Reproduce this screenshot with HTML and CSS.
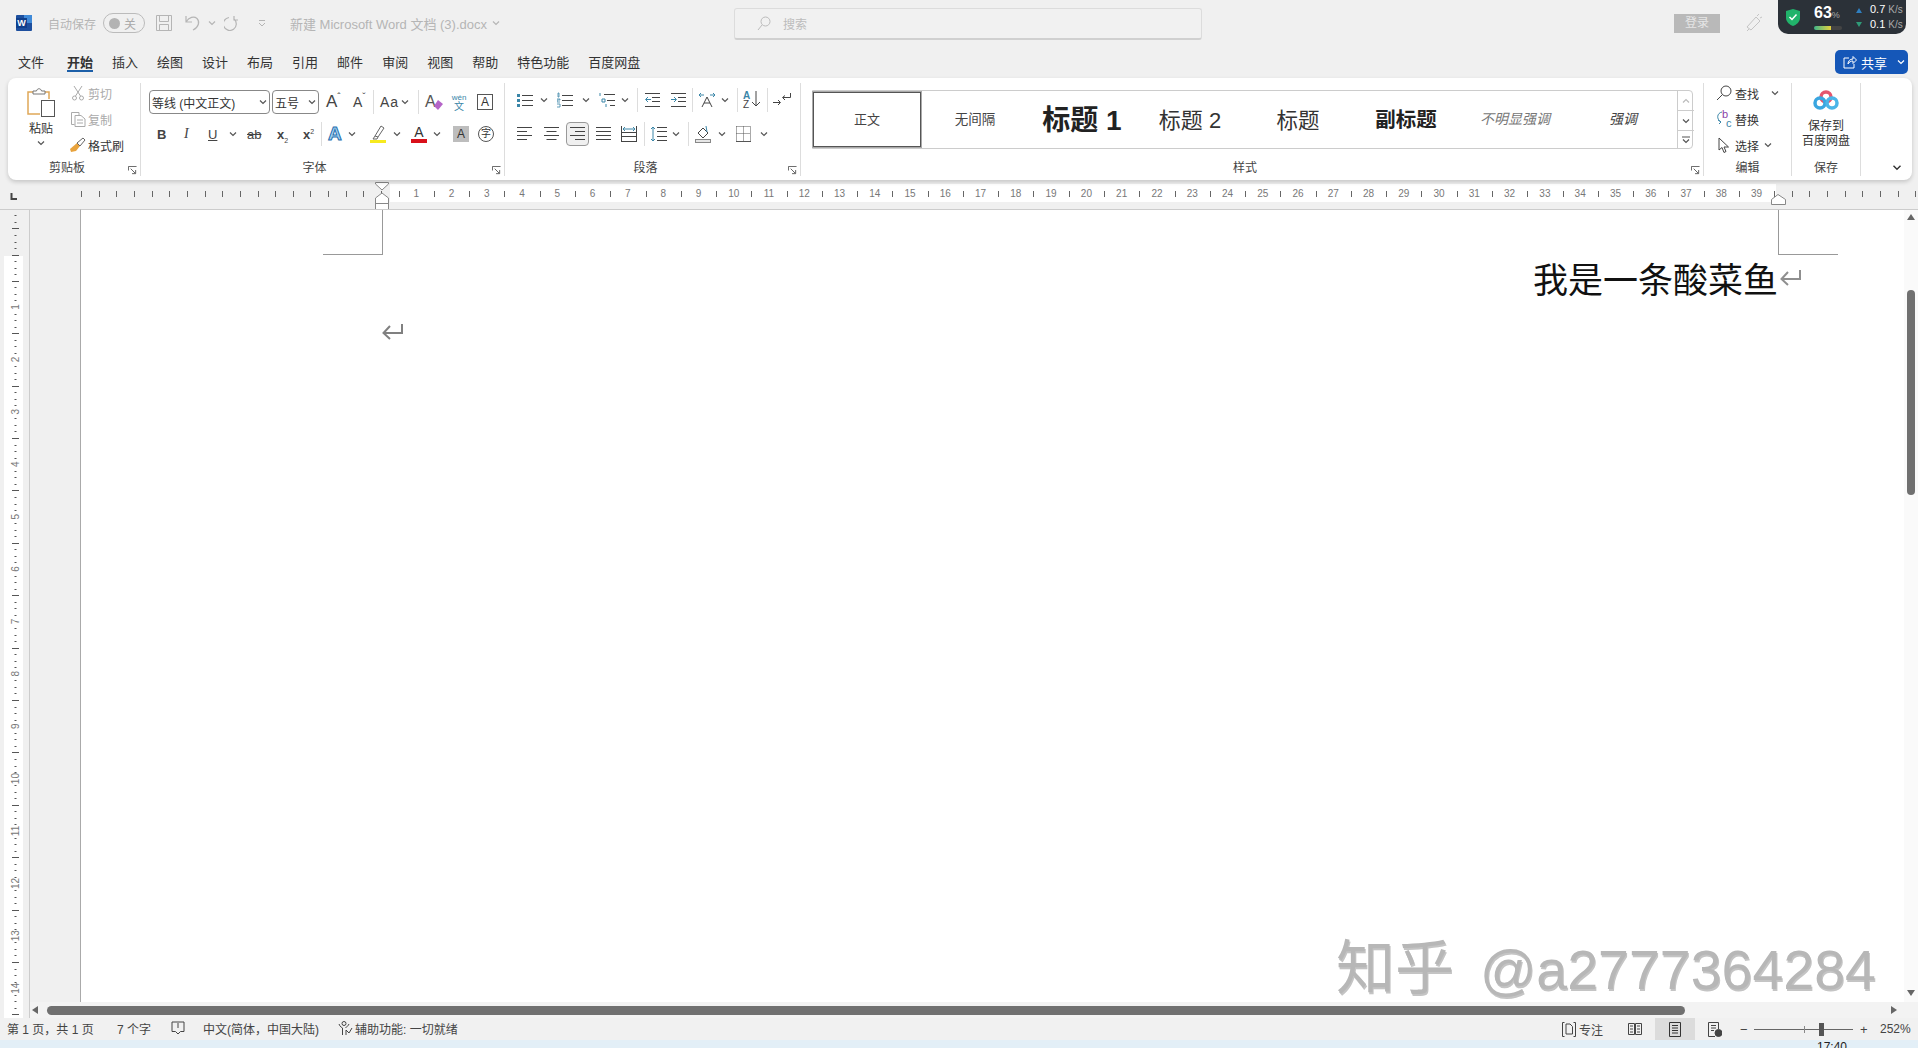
FILE: index.html
```html
<!DOCTYPE html>
<html lang="zh-CN">
<head>
  <meta charset="UTF-8" />
  <title>新建 Microsoft Word 文档 (3).docx - Word</title>
  <link rel="stylesheet" href="styles.css">
</head>
<body>
  <svg class="sprites" width="0" height="0">
    <symbol id="caret" viewBox="0 0 8 6"><path d="M1 1.5 4 4.5 7 1.5" fill="none" stroke="currentColor" stroke-width="1.2"/></symbol>
    <symbol id="launcher" viewBox="0 0 10 10"><path d="M.5 5V.5H9.5M3 3 8 8M4.5 8.5H8.5V4.5" fill="none" stroke="#555"/></symbol>
  </svg>

  <!-- 标题栏 -->
  <header class="titlebar">
    <svg class="word-icon" width="16" height="16" viewBox="0 0 16 16"><rect width="16" height="16" rx="1" fill="#1d4f9e"/><rect x="8" width="8" height="8" fill="#3f8ad8"/><rect y="3" width="11" height="10" fill="#0f3f8c"/><text x="5.5" y="11" class="word-w">W</text></svg>
    <span class="muted">自动保存</span>
    <span class="toggle"><i class="knob"></i><span>关</span></span>
    <svg width="16" height="16" viewBox="0 0 16 16" fill="none" stroke="#b5b5b5"><path d="M.5.5H15.5V15.5H.5ZM3.5.5V6.5H12.5V.5M3.5 15.5V9.5H12.5V15.5"/></svg>
    <svg width="16" height="16" viewBox="0 0 16 16" fill="none" stroke="#b5b5b5" stroke-width="1.2"><path d="M1 1V7H7M1 7C4 2 9 1 12 3.5 15 6.5 14 12 8 15"/></svg>
    <svg class="caret-sm grey" width="8" height="6"><use href="#caret"/></svg>
    <svg width="16" height="16" viewBox="0 0 16 16" fill="none" stroke="#b5b5b5" stroke-width="1.2"><path d="M10 1V5H14M10 4A6.5 6.5 0 1 1 5 2.5"/></svg>
    <svg width="8" height="8" viewBox="0 0 8 8" fill="none" stroke="#b5b5b5"><path d="M1 1.5H7M1 4 4 7 7 4"/></svg>
    <span class="muted doc-title">新建 Microsoft Word 文档 (3).docx <svg class="caret-sm grey" width="8" height="6"><use href="#caret"/></svg></span>
    <div class="search">
      <svg width="14" height="15" viewBox="0 0 14 15" fill="none" stroke="#bbb"><circle cx="8.5" cy="5.5" r="4.5"/><path d="M5 9 1 14"/></svg>
      <span>搜索</span>
    </div>
    <span class="login">登录</span>
    <svg width="18" height="18" viewBox="0 0 18 18" fill="none" stroke="#c4c4c4"><path d="M2 13 11 3 15 7 6 16ZM4 15 2 17M12 2 14 0M15 4 17 3"/></svg>
    <div class="tray">
      <svg width="14" height="17" viewBox="0 0 14 17"><path d="M7 0 14 2V9C14 13 10 16 7 17 4 16 0 13 0 9V2Z" fill="#21b36b"/><path d="M3.5 8 6 10.5 10.5 5.5" fill="none" stroke="#fff" stroke-width="1.5"/></svg>
      <div class="tray-score">
        <b>63<small>%</small></b>
        <span class="tray-bar"></span>
      </div>
      <div class="tray-arrows"><i class="up"></i><i class="down"></i></div>
      <div class="tray-speed">
        <span>0.7 <em>K/s</em></span>
        <span>0.1 <em>K/s</em></span>
      </div>
    </div>
  </header>

  <!-- 选项卡 -->
  <nav class="tabs">
    <a>文件</a>
    <a class="active">开始</a>
    <a>插入</a>
    <a>绘图</a>
    <a>设计</a>
    <a>布局</a>
    <a>引用</a>
    <a>邮件</a>
    <a>审阅</a>
    <a>视图</a>
    <a>帮助</a>
    <a>特色功能</a>
    <a>百度网盘</a>
    <button class="share">
      <svg width="14" height="14" viewBox="0 0 14 14" fill="none" stroke="#fff"><path d="M6 3H1V13H11V9M5 9C5 6 7 4 10 4V1.5L13.5 5 10 8.5V6C8 6 6 7 5 9Z"/></svg>
      <span>共享</span>
      <svg class="caret-sm" width="8" height="6"><use href="#caret"/></svg>
    </button>
  </nav>

  <!-- 功能区 -->
  <section class="ribbon">
    <div class="group g-clip">
      <div class="group-body clip-body">
        <div class="paste">
          <svg width="28" height="30" viewBox="0 0 28 30" fill="none"><path d="M6 4H1V26H13" stroke="#e0a858" stroke-width="1.5"/><path d="M18 4H22V11" stroke="#e0a858" stroke-width="1.5"/><path d="M6 6V3H9.5C10 0 14 0 14.5 3H18V6Z" stroke="#777" fill="#fff"/><rect x="14.5" y="12.5" width="13" height="16" stroke="#555" fill="#fff"/></svg>
          <span>粘贴</span>
          <svg class="caret-sm" width="8" height="6"><use href="#caret"/></svg>
        </div>
        <div class="clip-list">
          <div class="clip-item off">
            <svg width="12" height="16" viewBox="0 0 12 16" fill="none" stroke="#aaa"><path d="M2 1 8.5 11M10 1 3.5 11"/><circle cx="2.5" cy="13" r="2"/><circle cx="9.5" cy="13" r="2"/></svg>
            <span>剪切</span>
          </div>
          <div class="clip-item off">
            <svg width="15" height="15" viewBox="0 0 15 15" fill="none" stroke="#aaa"><path d="M3.5 12.5H.5V.5H8V3M4 3.5H10L14 7V14.5H4ZM6 8H12M6 11H12"/></svg>
            <span>复制</span>
          </div>
          <div class="clip-item">
            <svg width="16" height="16" viewBox="0 0 16 16"><path d="M7 6 10 9 6 14 1 15 0 12Z" fill="#e8a33d"/><path d="M7 6 13 1 15 3 10 9Z" fill="#fff" stroke="#666"/></svg>
            <span>格式刷</span>
          </div>
        </div>
      </div>
      <div class="group-label">剪贴板<svg class="launcher" width="9" height="9"><use href="#launcher"/></svg></div>
    </div>

    <div class="group g-font">
      <div class="group-body">
        <div class="tools font-r1">
          <span class="combo font-name">等线 (中文正文)<svg class="caret-sm" width="8" height="6"><use href="#caret"/></svg></span>
          <span class="combo font-size">五号<svg class="caret-sm" width="8" height="6"><use href="#caret"/></svg></span>
          <span class="glyph big-a">A<sup>ˆ</sup></span>
          <span class="glyph small-a">A<sup>ˇ</sup></span>
          <i class="sep"></i>
          <span class="glyph aa">Aa <svg class="caret-sm" width="8" height="6"><use href="#caret"/></svg></span>
          <i class="sep"></i>
          <span class="glyph clear-a">A<svg width="10" height="10" viewBox="0 0 10 10"><path d="M5 0 10 4 5 10 1 6Z" fill="#b565c8"/></svg></span>
          <span class="wen"><small>wén</small><b>文</b></span>
          <span class="boxed-a">A</span>
        </div>
        <div class="tools font-r2">
          <b class="glyph">B</b>
          <i class="glyph serif">I</i>
          <u class="glyph">U</u>
          <svg class="caret-sm" width="8" height="6"><use href="#caret"/></svg>
          <s class="glyph">ab</s>
          <b class="glyph">x<sub>2</sub></b>
          <b class="glyph">x<sup>2</sup></b>
          <i class="sep"></i>
          <span class="effect-a">A</span>
          <svg class="caret-sm" width="8" height="6"><use href="#caret"/></svg>
          <svg width="16" height="18" viewBox="0 0 16 18"><path d="M5 11 11 1 14 3 8 12ZM5 11 3 14H7L8 12" fill="#fff" stroke="#666"/><rect y="15" width="16" height="3" fill="#f7ea1f"/></svg>
          <svg class="caret-sm" width="8" height="6"><use href="#caret"/></svg>
          <span class="color-a">A</span>
          <svg class="caret-sm" width="8" height="6"><use href="#caret"/></svg>
          <span class="shade-a">A</span>
          <span class="circle-zi">字</span>
        </div>
      </div>
      <div class="group-label">字体<svg class="launcher" width="9" height="9"><use href="#launcher"/></svg></div>
    </div>

    <div class="group g-para">
      <div class="group-body">
        <div class="tools para-r1">
          <svg width="16" height="16" viewBox="0 0 16 16"><path d="M5 3.5H16M5 8.5H16M5 13.5H16" stroke="#444"/><path d="M0 2H3V5H0ZM0 7H3V10H0ZM0 12H3V15H0Z" fill="#3a86a8"/></svg>
          <svg class="caret-sm" width="8" height="6"><use href="#caret"/></svg>
          <svg width="16" height="16" viewBox="0 0 16 16"><path d="M5 3.5H16M5 8.5H16M5 13.5H16" stroke="#444"/><path d="M1 1H2V5H1ZM0 7H3V8H0V10H3M0 12H3V15H0" fill="none" stroke="#3a86a8" stroke-width=".8"/></svg>
          <svg class="caret-sm" width="8" height="6"><use href="#caret"/></svg>
          <svg width="16" height="16" viewBox="0 0 16 16"><path d="M5 2.5H16M8 8.5H16M11 13.5H16" stroke="#444"/><path d="M1 1V4M3 7H6V10H3ZM7 12V15" fill="none" stroke="#3a86a8"/></svg>
          <svg class="caret-sm" width="8" height="6"><use href="#caret"/></svg>
          <i class="sep"></i>
          <svg width="15" height="14" viewBox="0 0 15 14"><path d="M0 .5H15M7 4.5H15M7 8.5H15M0 13.5H15" stroke="#444"/><path d="M6 6.5H1M3 4 .5 6.5 3 9" fill="none" stroke="#3a86a8"/></svg>
          <svg width="15" height="14" viewBox="0 0 15 14"><path d="M0 .5H15M7 4.5H15M7 8.5H15M0 13.5H15" stroke="#444"/><path d="M0 6.5H5M3 4 5.5 6.5 3 9" fill="none" stroke="#3a86a8"/></svg>
          <i class="sep"></i>
          <svg width="16" height="16" viewBox="0 0 16 16" fill="none"><path d="M3 15 8 5 13 15M5 11H11" stroke="#444"/><path d="M0 3H5M2 1 0 3 2 5M16 3H11M14 1 16 3 14 5" stroke="#3a86a8"/></svg>
          <svg class="caret-sm" width="8" height="6"><use href="#caret"/></svg>
          <i class="sep"></i>
          <span class="sort"><b>A</b><b>Z</b><svg width="8" height="16" viewBox="0 0 8 16" fill="none" stroke="#444"><path d="M4 0V15M0 11 4 15 8 11"/></svg></span>
          <i class="sep"></i>
          <svg width="18" height="14" viewBox="0 0 18 14" fill="none" stroke="#444"><path d="M0 9.5H7M5 7 7.5 9.5 5 12M17.5 0V4.5H10M12 2.5 9.5 4.5 12 7"/></svg>
        </div>
        <div class="tools para-r2">
          <svg width="15" height="14" viewBox="0 0 15 14"><path d="M0 .5H15M0 4.5H10M0 8.5H15M0 12.5H10" stroke="#444"/></svg>
          <svg width="15" height="14" viewBox="0 0 15 14"><path d="M0 .5H15M2.5 4.5H12.5M0 8.5H15M2.5 12.5H12.5" stroke="#444"/></svg>
          <span class="active-tool"><svg width="15" height="14" viewBox="0 0 15 14"><path d="M0 .5H15M5 4.5H15M0 8.5H15M5 12.5H15" stroke="#444"/></svg></span>
          <svg width="15" height="14" viewBox="0 0 15 14"><path d="M0 .5H15M0 4.5H15M0 8.5H15M0 12.5H15" stroke="#444"/></svg>
          <svg width="16" height="16" viewBox="0 0 16 16" fill="none"><path d="M.5 0V16M15.5 0V16M0 6.5H16M0 10.5H16M0 15.5H16" stroke="#444"/><path d="M2 3H14M4 1 2 3 4 5M12 1 14 3 12 5" stroke="#3a86a8"/></svg>
          <i class="sep"></i>
          <svg width="17" height="16" viewBox="0 0 17 16" fill="none"><path d="M7 1.5H17M7 5.5H17M7 10.5H17M7 14.5H17" stroke="#444"/><path d="M3 1V15M1 3 3 1 5 3M1 13 3 15 5 13" stroke="#3a86a8"/></svg>
          <svg class="caret-sm" width="8" height="6"><use href="#caret"/></svg>
          <i class="sep"></i>
          <svg width="16" height="18" viewBox="0 0 16 18" fill="none"><path d="M3 8 8 3 13 8 8 13Z" stroke="#444"/><path d="M11 1 12 7" stroke="#3a86a8"/><rect x=".5" y="14.5" width="15" height="3" fill="#e6e6e6" stroke="#888"/></svg>
          <svg class="caret-sm" width="8" height="6"><use href="#caret"/></svg>
          <svg width="15" height="16" viewBox="0 0 15 16" fill="none" stroke="#555"><path d="M.5.5H14.5M.5 7.5H14.5M7.5.5V15M.5.5V15M14.5.5V15" stroke-dasharray="1 1"/><path d="M0 15.5H15"/></svg>
          <svg class="caret-sm" width="8" height="6"><use href="#caret"/></svg>
        </div>
      </div>
      <div class="group-label">段落<svg class="launcher" width="9" height="9"><use href="#launcher"/></svg></div>
    </div>

    <div class="group g-styles">
      <div class="group-body">
        <div class="gallery">
          <span class="style selected">正文</span>
          <span class="style s-plain">无间隔</span>
          <span class="style s-h1">标题 1</span>
          <span class="style s-h2">标题 2</span>
          <span class="style s-title">标题</span>
          <span class="style s-sub">副标题</span>
          <span class="style s-weak">不明显强调</span>
          <span class="style s-em">强调</span>
          <div class="gallery-scroll">
            <span><svg width="8" height="6" viewBox="0 0 8 6" fill="none" stroke="#bbb" stroke-width="1.2"><path d="M1 4.5 4 1.5 7 4.5"/></svg></span>
            <span><svg class="caret-sm" width="8" height="6"><use href="#caret"/></svg></span>
            <span><svg width="8" height="8" viewBox="0 0 8 8" fill="none" stroke="#555" stroke-width="1.2"><path d="M0 1H8M1 3.5 4 6.5 7 3.5"/></svg></span>
          </div>
        </div>
      </div>
      <div class="group-label">样式<svg class="launcher" width="9" height="9"><use href="#launcher"/></svg></div>
    </div>

    <div class="group g-edit">
      <div class="group-body edit-list">
        <div class="edit-item">
          <svg width="16" height="16" viewBox="0 0 16 16" fill="none" stroke="#444"><circle cx="10" cy="6" r="5"/><path d="M6.5 9.5 1 15"/></svg>
          <span>查找</span><svg class="caret-sm find-caret" width="8" height="6"><use href="#caret"/></svg>
        </div>
        <div class="edit-item">
          <span class="replace-icon"><b>b</b><i>c</i><svg width="9" height="14" viewBox="0 0 9 14" fill="none" stroke="#3a86a8"><path d="M6 1C1 2 0 8 5 11M2 9 5 11 3 13"/></svg></span>
          <span>替换</span>
        </div>
        <div class="edit-item">
          <svg width="12" height="17" viewBox="0 0 12 17" fill="none" stroke="#444"><path d="M1 1V13L4 10.5 6 15.5 8 14.5 6 10H10.5Z"/></svg>
          <span>选择</span><svg class="caret-sm" width="8" height="6"><use href="#caret"/></svg>
        </div>
      </div>
      <div class="group-label">编辑</div>
    </div>

    <div class="group g-save">
      <div class="group-body save-body">
        <svg width="26" height="20" viewBox="0 0 26 20" fill="none" stroke-width="3.5"><circle cx="13" cy="7" r="5" stroke="#e5566d"/><circle cx="7" cy="13" r="5" stroke="#3aa6e0"/><circle cx="19" cy="13" r="5" stroke="#4ab5e8"/></svg>
        <span>保存到</span>
        <span>百度网盘</span>
      </div>
      <div class="group-label">保存</div>
    </div>

    <div class="ribbon-end">
      <svg width="10" height="7" viewBox="0 0 8 6"><use href="#caret"/></svg>
    </div>
  </section>

  <!-- 标尺 -->
  <div class="hruler" id="hruler"></div>

  <div class="lower">
    <div class="vruler" id="vruler"></div>
    <div class="main-col">
      <div class="workspace">
        <div class="gutter"></div>
        <div class="page">
          <i class="corner corner-l"></i>
          <i class="corner corner-r"></i>
          <p class="line-right">我是一条酸菜鱼<svg class="para-mark" width="21" height="17" viewBox="0 0 21 17"><path d="M20 1V10H2M8 3 1.5 10 8 16" fill="none" stroke="#8f8f8f" stroke-width="2"/></svg></p>
          <p class="line-empty"><svg class="para-mark" width="21" height="17" viewBox="0 0 21 17"><path d="M20 1V10H2M8 3 1.5 10 8 16" fill="none" stroke="#808080" stroke-width="2"/></svg></p>
        </div>
        <div class="vscroll">
          <span class="arrow-up"></span>
          <span class="vthumb"></span>
          <span class="arrow-down"></span>
        </div>
      </div>
      <div class="hscroll">
        <span class="arrow-left"></span>
        <span class="hthumb"></span>
        <span class="arrow-right"></span>
      </div>
    </div>
  </div>

  <!-- 状态栏 -->
  <footer class="statusbar">
    <div class="status-left">
      <span>第 1 页，共 1 页</span>
      <span>7 个字</span>
      <svg width="14" height="14" viewBox="0 0 14 14" fill="none" stroke="#444"><path d="M7 2V7M7 13 4.5 10.5H1V1H13V10.5H9.5Z"/></svg>
      <span>中文(简体，中国大陆)</span>
      <svg width="15" height="15" viewBox="0 0 15 15" fill="none" stroke="#444"><circle cx="6" cy="2.5" r="2"/><path d="M1 3C2 6 4 6.5 4.5 7V14M8 14V9L11 12 14 7M7.5 6.5C9 6 10 5 11 3"/></svg>
      <span>辅助功能: 一切就绪</span>
    </div>
    <div class="status-right">
      <svg width="14" height="15" viewBox="0 0 14 15" fill="none" stroke="#444"><path d="M2.5.5H.5V14.5H2.5M11.5.5H13.5V14.5H11.5M4 2H8L10.5 4.5V12H4Z"/></svg>
      <span>专注</span>
      <svg width="14" height="14" viewBox="0 0 14 14" fill="none" stroke="#444"><path d="M.5 1.5H6.5V12.5H.5ZM7.5 1.5H13.5V12.5H7.5ZM2 4H5M2 7H5M2 10H5M9 4H12M9 7H12M9 10H12"/></svg>
      <span class="view-active"><svg width="12" height="15" viewBox="0 0 12 15" fill="none" stroke="#333"><path d="M.5.5H11.5V14.5H.5ZM3 3.5H9M3 6H9M3 8.5H9M3 11H9"/></svg></span>
      <svg width="14" height="15" viewBox="0 0 14 15" fill="none" stroke="#444"><path d="M.5.5H10.5V7M7 14.5H.5V.5M3 3.5H8M3 6H8M3 8.5H6"/><circle cx="10.5" cy="11" r="3.5" fill="#444"/></svg>
      <span class="zoom-btn">−</span>
      <span class="slider"><i class="slider-mid"></i><i class="slider-thumb"></i></span>
      <span class="zoom-btn">+</span>
      <span>252%</span>
    </div>
  </footer>
  <div class="taskbar"><span>17:40</span></div>

  <div class="watermark">知乎<span class="watermark-id">@a2777364284</span></div>

  <script src="ruler.js"></script>
</body>
</html>
```
FILE: styles.css
```css
* {
  box-sizing: border-box;
}
html, body {
  margin: 0;
  height: 1048px;
  overflow: hidden;
}
body {
  position: relative;
  width: 1918px;
  background: #f0f0f0;
  color: #333;
  font-family: "Liberation Sans", "Noto Sans CJK SC", sans-serif;
  font-size: 12px;
}
svg {
  display: block;
  flex: none;
}
.sprites {
  position: absolute;
}
.caret-sm {
  color: #555;
}
.grey {
  color: #b5b5b5;
}

/* 标题栏 */
.titlebar {
  display: grid;
  grid-template-columns: 32px 55px 53px 29px 23px 16px 34px 32px 444px 940px 71px 33px 128px;
  align-items: center;
  height: 46px;
  padding-left: 16px;
}
.word-w {
  fill: #fff;
  font: bold 9px "Liberation Sans", sans-serif;
  text-anchor: middle;
}
.muted {
  color: #b5b5b5;
}
.doc-title {
  display: flex;
  align-items: center;
  gap: 5px;
  font-size: 13px;
}
.toggle {
  display: flex;
  align-items: center;
  justify-content: space-between;
  width: 42px;
  height: 20px;
  padding: 0 8px 0 5px;
  border: 1px solid #bbb;
  border-radius: 10px;
  color: #aaa;
}
.knob {
  width: 11px;
  height: 11px;
  border-radius: 50%;
  background: #b3b3b3;
}
.search {
  display: flex;
  align-items: center;
  gap: 12px;
  width: 468px;
  height: 32px;
  margin-top: 2px;
  padding-left: 22px;
  background: #f1f1f1;
  border: 1px solid #dcdcdc;
  border-bottom: 2px solid #d0d0d0;
  border-radius: 3px;
  color: #bcbcbc;
}
.login {
  width: 46px;
  height: 19px;
  background: #b9b9b9;
  color: #e6e6e6;
  text-align: center;
  line-height: 19px;
}
.tray {
  display: flex;
  align-self: start;
  align-items: center;
  height: 34px;
  padding-left: 8px;
  background: #2b3138;
  border-radius: 0 0 10px 10px;
  color: #fff;
}
.tray-score {
  display: flex;
  flex-direction: column;
  width: 36px;
  margin-left: 14px;
}
.tray-score b {
  font-size: 16px;
  line-height: 17px;
}
.tray-score small {
  font-size: 9px;
  font-weight: normal;
  color: #aaa;
}
.tray-bar {
  width: 28px;
  height: 4px;
  margin-top: 2px;
  border-radius: 2px;
  background: linear-gradient(90deg, #3fb68b 0, #e3cf3c 60%, #444 62%);
}
.tray-arrows {
  display: flex;
  flex-direction: column;
  gap: 9px;
  margin: 0 8px 0 6px;
}
.tray-arrows i {
  width: 0;
  border: 3px solid transparent;
}
.tray-arrows .up {
  border-top: 0;
  border-bottom: 5px solid #2f7fc0;
}
.tray-arrows .down {
  border-bottom: 0;
  border-top: 5px solid #2f9a78;
}
.tray-speed {
  display: flex;
  flex-direction: column;
  gap: 2px;
  font-size: 11px;
  line-height: 13px;
  white-space: nowrap;
}
.tray-speed em {
  font-style: normal;
  font-size: 10px;
  color: #aaa;
}

/* 选项卡 */
.tabs {
  display: flex;
  align-items: center;
  gap: 19px;
  height: 32px;
  padding: 0 10px 0 18px;
  font-size: 13px;
  color: #333;
}
.tabs a {
  margin-top: -2px;
}
.tabs a.active {
  position: relative;
  margin-left: 4px;
  font-weight: bold;
}
.tabs a.active::after {
  content: "";
  position: absolute;
  left: 0;
  right: 0;
  bottom: -1px;
  height: 2px;
  background: #1c5fa8;
}
.share {
  display: flex;
  align-items: center;
  gap: 4px;
  width: 73px;
  height: 24px;
  margin-left: auto;
  padding: 0 0 0 8px;
  border: 0;
  border-radius: 5px;
  background: #1557b8;
  color: #fff;
  font: 13px "Liberation Sans", "Noto Sans CJK SC", sans-serif;
}
.share .caret-sm {
  margin-left: 6px;
  color: #fff;
}

/* 功能区 */
.ribbon {
  display: flex;
  width: 1904px;
  height: 102px;
  margin-left: 8px;
  padding: 5px 0;
  background: #fff;
  border-radius: 8px;
  box-shadow: 0 2px 4px rgba(0,0,0,0.18);
  position: relative;
}
.group {
  display: flex;
  flex-direction: column;
  flex: none;
  height: 93px;
  border-right: 1px solid #ddd;
}
.group-body {
  flex: 1;
}
.group-label {
  position: relative;
  height: 16px;
  text-align: center;
  font-size: 12px;
  line-height: 16px;
  color: #444;
}
.launcher {
  position: absolute;
  right: 3px;
  bottom: 1px;
}
.g-clip { width: 133px; }
.g-clip .group-label { padding-right: 14px; }
.g-font { width: 364px; padding-left: 8px; }
.g-font .group-label { padding-right: 24px; }
.g-para { width: 296px; padding-left: 12px; }
.g-para .group-label { padding-right: 26px; }
.g-styles { width: 903px; padding-left: 11px; }
.g-styles .group-label { padding-right: 25px; }
.g-edit { width: 88px; }
.g-save { width: 69px; }

.clip-body {
  display: flex;
}
.paste {
  display: flex;
  flex-direction: column;
  align-items: center;
  width: 60px;
  padding: 5px 0 0 6px;
}
.paste span {
  margin-top: 3px;
  line-height: 16px;
}
.paste .caret-sm {
  margin-top: 3px;
}
.clip-list {
  margin-top: -3px;
}
.clip-item {
  display: grid;
  grid-template-columns: 20px auto;
  justify-content: start;
  align-items: center;
  justify-items: center;
  height: 26px;
}
.clip-item.off {
  color: #aaa;
}

.tools {
  display: grid;
  align-items: center;
  height: 24px;
}
.font-r1 {
  grid-template-columns: 123px 54px 27px 20px 7px 38px 7px 27px 25px auto;
  margin-top: 7px;
}
.font-r2 {
  grid-template-columns: 27px 24px 21px 18px 30px 26px 18px 7px 20px 22px 23px 18px 22px 20px 25px auto;
  margin: 8px 0 0 8px;
}
.para-r1 {
  grid-template-columns: 23px 17px 25px 17px 22px 16px 8px 26px 21px 7px 22px 16px 6px 24px 6px auto;
  margin-top: 5px;
}
.para-r2 {
  grid-template-columns: 27px 22px 30px 25px 23px 6px 22px 16px 7px 23px 18px 24px auto;
  margin-top: 10px;
}
.sep {
  display: block;
  width: 1px;
  height: 24px;
  background: #ddd;
}
.glyph {
  display: flex;
  align-items: center;
  font-size: 13px;
  color: #444;
  white-space: nowrap;
}
b.glyph, u.glyph, s.glyph {
  display: block;
}
.serif {
  font-family: "Liberation Serif", serif;
  font-size: 14px;
}
.glyph sub, .glyph sup {
  font-size: 7px;
  font-weight: normal;
  line-height: 0;
}
.combo {
  display: flex;
  align-items: center;
  justify-content: space-between;
  height: 24px;
  padding: 0 2px;
  border: 1px solid #888;
  border-radius: 4px;
  white-space: nowrap;
}
.font-name { width: 121px; }
.font-size { width: 47px; }
.big-a { font-size: 17px; }
.big-a sup, .small-a sup {
  margin-top: -8px;
  font-size: 10px;
}
.small-a { font-size: 14px; }
.aa { font-size: 14px; letter-spacing: 1px; gap: 2px; }
.clear-a { font-size: 16px; color: #555; }
.clear-a svg { margin: 6px 0 0 -3px; }
.wen {
  display: flex;
  flex-direction: column;
  width: 14px;
  align-items: center;
  font-size: 8px;
  line-height: 9px;
  color: #3a86a8;
}
.wen small { font-size: 8px; }
.wen b { font-weight: normal; font-size: 10px; }
.boxed-a {
  width: 16px;
  height: 16px;
  border: 1px solid #555;
  text-align: center;
  line-height: 14px;
  font-size: 12px;
}
.effect-a {
  font-size: 19px;
  font-weight: bold;
  color: #a8d4f0;
  -webkit-text-stroke: 1px #1f6fb0;
  line-height: 24px;
}
.color-a {
  width: 16px;
  height: 18px;
  border-bottom: 4px solid #d9101a;
  text-align: center;
  font-size: 14px;
  line-height: 14px;
}
.shade-a {
  width: 16px;
  height: 16px;
  background: #bdbdbd;
  text-align: center;
  line-height: 16px;
  font-size: 12px;
}
.circle-zi {
  width: 16px;
  height: 16px;
  border: 1px solid #555;
  border-radius: 50%;
  text-align: center;
  line-height: 14px;
  font-size: 10px;
}
.sort {
  display: grid;
  grid-template-columns: 9px 9px;
  grid-template-rows: 9px 9px;
  color: #3a86a8;
  font-size: 10px;
  line-height: 9px;
}
.sort b:nth-child(2) { grid-row: 2; color: #444; font-weight: normal; }
.sort svg { grid-column: 2; grid-row: 1 / 3; }
.active-tool {
  display: flex;
  align-items: center;
  justify-content: center;
  width: 23px;
  height: 24px;
  background: #f0f0f0;
  border: 1px solid #999;
  border-radius: 4px;
}

.gallery {
  display: grid;
  grid-template-columns: repeat(8, 108px) 16px;
  width: 881px;
  height: 59px;
  margin-top: 7px;
  border: 1px solid #ccc;
  border-radius: 0 4px 4px 0;
}
.style {
  display: flex;
  align-items: center;
  justify-content: center;
  padding-bottom: 3px;
  color: #444;
  white-space: nowrap;
}
.style.selected {
  height: 55px;
  margin-top: 1px;
  background: #fff;
  border: 1px solid #555;
  outline: 1px solid #aaa;
  font-size: 13px;
}
.s-plain { font-size: 13.5px; }
.s-h1 { font-size: 28px; font-weight: bold; color: #222; margin-left: -2px; }
.s-h2 { font-size: 22px; color: #333; margin-left: -2px; }
.s-title { font-size: 21.5px; color: #333; margin-left: -2px; }
.s-sub { font-size: 20.5px; font-weight: bold; color: #222; margin-left: -2px; }
.s-weak { font-size: 14px; font-style: italic; color: #777; }
.s-em { font-size: 14px; font-style: italic; color: #444; }
.gallery-scroll {
  display: grid;
  grid-template-rows: 20px 20px 1fr;
  border-left: 1px solid #ccc;
  margin-right: -1px;
}
.gallery-scroll span {
  display: flex;
  align-items: center;
  justify-content: center;
  border-bottom: 1px solid #ccc;
}
.gallery-scroll span:last-child {
  border-bottom: 0;
}
.edit-list {
  margin-top: -3px;
  padding-left: 12px;
}
.edit-item {
  display: flex;
  align-items: center;
  height: 26px;
}
.edit-item > svg:first-child, .replace-icon {
  margin-right: 3px;
}
.edit-item > svg:first-child {
  width: 16px;
}
.edit-item .caret-sm {
  margin-left: 5px;
}
.edit-item .find-caret {
  margin-left: 12px;
}
.replace-icon {
  display: block;
  position: relative;
  flex: none;
  width: 16px;
  height: 16px;
}
.replace-icon b, .replace-icon i {
  position: absolute;
  font-style: normal;
  font-weight: normal;
  font-size: 11px;
  line-height: 1;
}
.replace-icon b { left: 6px; top: -2px; color: #8a3fa8; }
.replace-icon i { left: 10px; top: 7px; color: #3a86a8; }
.save-body {
  display: flex;
  flex-direction: column;
  align-items: center;
  padding-top: 7px;
  line-height: 15px;
}
.save-body svg {
  margin-bottom: 9px;
}
.ribbon-end {
  display: flex;
  flex: 1;
  align-items: flex-end;
  justify-content: center;
  padding: 0 0 4px 20px;
  color: #333;
}

/* 标尺 */
.hruler {
  height: 30px;
}
.hruler svg, .vruler svg {
  font-family: "Liberation Sans", sans-serif;
  font-size: 10px;
  fill: #777;
}
.lower {
  display: flex;
  height: 808px;
}
.vruler {
  flex: none;
  width: 30px;
  border-right: 1px solid #ccc;
}
.main-col {
  display: flex;
  flex-direction: column;
  flex: 1;
}
.workspace {
  display: flex;
  height: 792px;
}
.gutter {
  flex: none;
  width: 50px;
}
.page {
  position: relative;
  flex: 1;
  padding-top: 42px;
  margin-top: -1px;
  background: #fff;
  border-left: 1px solid #aaa;
  border-top: 1px solid #ccc;
}
.corner {
  position: absolute;
  top: 0;
  width: 60px;
  height: 45px;
  border-bottom: 1px solid #999;
}
.corner-l {
  left: 242px;
  border-right: 1px solid #999;
}
.corner-r {
  left: 1697px;
  border-left: 1px solid #999;
}
.line-right {
  display: flex;
  align-items: center;
  justify-content: flex-end;
  height: 50px;
  margin: 0;
  padding-right: 103px;
  font-size: 35px;
  color: #111;
}
.para-mark {
  margin-left: 2px;
}
.line-empty {
  height: 50px;
  margin: 0;
  padding: 21px 0 0 299px;
}
.vscroll {
  display: flex;
  flex-direction: column;
  align-items: center;
  flex: none;
  position: relative;
  width: 14px;
  background: #fafafa;
}
.vthumb {
  position: absolute;
  top: 80px;
  width: 8px;
  height: 205px;
  border-radius: 4px;
  background: #707070;
}
.arrow-up, .arrow-down, .arrow-left, .arrow-right {
  position: absolute;
  width: 0;
  border: 4px solid transparent;
}
.arrow-up { top: 4px; border-top: 0; border-bottom: 6px solid #666; }
.arrow-down { bottom: 6px; border-bottom: 0; border-top: 6px solid #666; }
.hscroll {
  position: relative;
  display: flex;
  align-items: center;
  height: 16px;
  background: #f3f3f3;
}
.hthumb {
  position: absolute;
  left: 17px;
  width: 1638px;
  height: 9px;
  border-radius: 5px;
  background: #707070;
}
.arrow-left { left: 2px; border-left: 0; border-right: 6px solid #666; }
.arrow-right { left: 1861px; border-right: 0; border-left: 6px solid #666; }

/* 状态栏 */
.statusbar {
  display: flex;
  justify-content: space-between;
  align-items: center;
  height: 22px;
  background: #f1f1f1;
  color: #444;
  white-space: nowrap;
}
.status-left {
  display: grid;
  grid-template-columns: 110px 54px 32px 135px 17px auto;
  align-items: center;
  padding: 0 0 2px 7px;
}
.status-right {
  display: grid;
  grid-template-columns: 17px 49px 27px 53px 32px 14px 106px 20px auto;
  align-items: center;
  width: 356px;
  height: 22px;
}
.view-active {
  display: flex;
  align-items: center;
  justify-content: center;
  width: 40px;
  height: 22px;
  background: #dcdcdc;
}
.zoom-btn {
  font-size: 13px;
}
.slider {
  position: relative;
  display: block;
  width: 99px;
  height: 1px;
  background: #666;
}
.slider-mid {
  position: absolute;
  left: 50px;
  top: -3px;
  width: 1px;
  height: 7px;
  background: #888;
}
.slider-thumb {
  position: absolute;
  left: 65px;
  top: -6px;
  width: 5px;
  height: 13px;
  background: #555;
}
.taskbar {
  height: 8px;
  overflow: hidden;
  padding-left: 1817px;
  background: #e3eff7;
  color: #222;
  font-size: 12px;
  line-height: 14px;
}
.watermark {
  position: absolute;
  left: 1336px;
  top: 933px;
  font-size: 59px;
  line-height: 72px;
  white-space: nowrap;
  color: #b7b7b7;
  text-shadow: 1px 2px 0 #c4c4c4;
}
.watermark-id {
  margin-left: 26px;
  font-size: 55.5px;
}
```
FILE: ruler.js
```js
// 标尺刻度
function drawHRuler() {
  const step = 35.27;
  const zero = 381;
  let html = '<rect x="390" y="4" width="1386" height="18" fill="#fff"/>';
  html += '<path d="M11.5 13V19H17" fill="none" stroke="#444" stroke-width="2"/>';
  html += '<path d="M0 29.5H1918" stroke="#ccc"/>';
  for (let x = 81; x < 1918; x += step / 2) {
    const n = Math.round((x - zero) / step * 2) / 2;
    if (Number.isInteger(n) && n >= 1 && n <= 39) {
      html += `<text x="${zero + n * step}" y="16.5" text-anchor="middle">${n}</text>`;
    } else {
      const tx = Math.round(zero + n * step) + 0.5;
      html += `<path d="M${tx} 11V17" stroke="#666"/>`;
    }
  }
  // 缩进滑块
  html += '<path d="M375.5 2.5H388.5V4L382 10 375.5 4ZM375.5 29.5V18L382 13 388.5 18V29.5ZM375.5 23.5H388.5" fill="#fff" stroke="#888"/>';
  html += '<path d="M1771.5 24.5V19.5L1778 14.5 1785.5 19.5V24.5Z" fill="#fff" stroke="#888"/>';
  document.getElementById('hruler').innerHTML = `<svg width="1918" height="30">${html}</svg>`;
}

function drawVRuler() {
  const step = 52.4;
  const zero = 254.6;
  let html = '<rect x="4" y="46" width="19" height="762" fill="#fff"/>';
  for (let i = -6; i < 118; i++) {
    const y = zero + i * step / 8 - 210;
    if (y < 2 || y > 806) continue;
    const yy = Math.round(y) + 0.5;
    if (i > 0 && i % 8 === 0) {
      html += `<text transform="translate(19 ${y}) rotate(-90)" text-anchor="middle">${i / 8}</text>`;
    } else if (i % 4 === 0) {
      html += `<path d="M12 ${yy}H19" stroke="#555"/>`;
    } else {
      html += `<path d="M14.5 ${yy}H16.5" stroke="#555"/>`;
    }
  }
  document.getElementById('vruler').innerHTML = `<svg width="29" height="808">${html}</svg>`;
}

drawHRuler();
drawVRuler();
```
